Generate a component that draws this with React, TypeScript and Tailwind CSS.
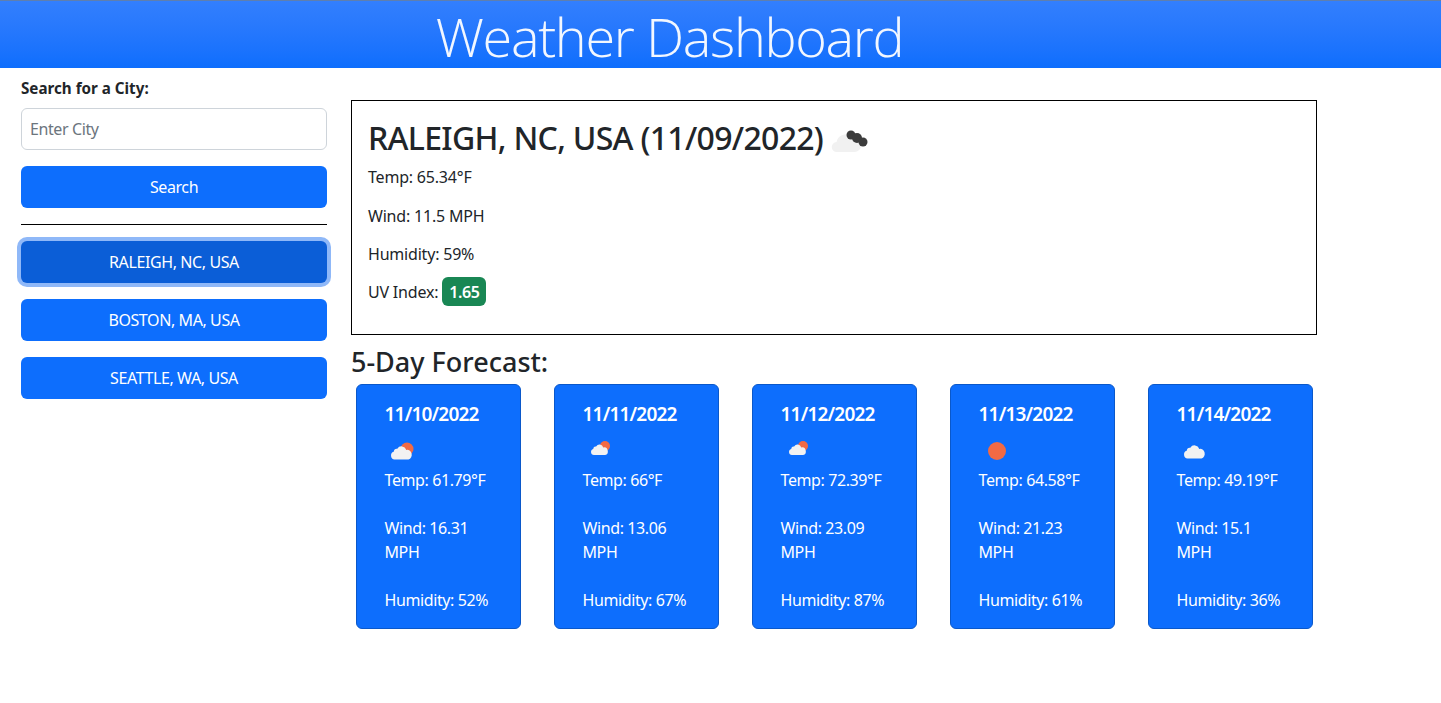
import React from 'react';

type IconKind = 'few' | 'few-small' | 'sun' | 'cloud';

interface ForecastDay {
  date: string;
  temp: string;
  wind: string;
  humidity: string;
  icon: IconKind;
}

const forecast: ForecastDay[] = [
  { date: '11/10/2022', temp: '61.79', wind: '16.31', humidity: '52', icon: 'few' },
  { date: '11/11/2022', temp: '66', wind: '13.06', humidity: '67', icon: 'few-small' },
  { date: '11/12/2022', temp: '72.39', wind: '23.09', humidity: '87', icon: 'few-small' },
  { date: '11/13/2022', temp: '64.58', wind: '21.23', humidity: '61', icon: 'sun' },
  { date: '11/14/2022', temp: '49.19', wind: '15.1', humidity: '36', icon: 'cloud' },
];

// cloud drawn in a 21x14 box
const cloudPath = 'M3.500 14a3.500 3.500 0 0 1-.8-6.900 3.200 3.200 0 0 1 3.600-2.700A5 5 0 0 1 15.200 5.500 4.300 4.300 0 0 1 17.500 14z';

const WeatherIcon: React.FC<{ kind: IconKind }> = ({ kind }) => {
  return (
    <svg className="block w-[34px] h-[40px]" viewBox="0 0 34 40">
      {kind === 'sun' && <circle cx="18" cy="25" r="9" fill="#f26a44" />}
      {kind === 'cloud' && <path transform="translate(7 17) scale(1 1.1)" d={cloudPath} fill="#f2f2f2" />}
      {kind === 'few' && (
        <>
          <circle cx="22" cy="23" r="6.500" fill="#f26a44" />
          <path transform="translate(6 18) scale(1 1.1)" d={cloudPath} fill="#f2f2f2" />
        </>
      )}
      {kind === 'few-small' && (
        <>
          <circle cx="22" cy="20" r="5" fill="#f26a44" />
          <path transform="translate(8 16.500) scale(.81 .9)" d={cloudPath} fill="#f2f2f2" />
        </>
      )}
    </svg>
  );
};

const BrokenClouds: React.FC = () => (
  <svg className="w-[38px] h-[34px] ml-2 shrink-0" viewBox="0 0 38 34">
    <path d="M6 31a5 5 0 0 1-.5-10A9.500 9.500 0 0 1 23 18a6.500 6.500 0 0 1 1 13z" fill="#f1f1f1" />
    <circle cx="20" cy="14" r="4.500" fill="#3c3c3c" />
    <circle cx="26" cy="17" r="5" fill="#3c3c3c" />
    <circle cx="32" cy="21" r="4.500" fill="#3c3c3c" />
  </svg>
);

const cityBtn = 'w-full h-[42px] rounded-md bg-[#0d6efd] text-white text-center tracking-[-0.4px]';

export default function App() {
  return (
    <div className="min-h-[703px] bg-white text-[#212529] text-base leading-6 font-['Noto_Sans','Open_Sans',sans-serif]">
      <header className="h-[68px] border-t border-[#5f7fae] pt-[3px] bg-gradient-to-b from-[#337ffd] to-[#0d6efd] flex justify-center pr-[102px]">
        <h1 className="text-[54px] leading-[64px] font-light text-[#f2f7ff] font-['Open_Sans',sans-serif] tracking-[-1.35px]">Weather Dashboard</h1>
      </header>

      <div className="flex">
        <aside className="w-[306px] ml-[21px] pt-[8px]">
          <label className="block font-bold text-[15.2px] mb-[8px] leading-6">Search for a City:</label>
          <input
            placeholder="Enter City"
            className="block w-full h-[42px] px-[8px] tracking-[-0.4px] border border-[#ced4da] rounded-md placeholder:text-[#6c757d] outline-none"
          />
          <button className="w-full h-[42px] mt-4 rounded-md bg-[#0d6efd] text-white tracking-[-0.4px]">Search</button>
          <hr className="mt-4 mb-4 border-t border-black" />
          <div className="flex flex-col gap-4">
            <button className="w-full h-[42px] rounded-md bg-[#0b5ed7] text-white tracking-[-0.4px] ring-4 ring-[#8fb8f8]">RALEIGH, NC, USA</button>
            <button className={cityBtn}>BOSTON, MA, USA</button>
            <button className={cityBtn}>SEATTLE, WA, USA</button>
          </div>
        </aside>

        <main className="w-[966px] ml-[24px] pt-[32px]">
          <section className="h-[235px] border border-black px-4 pt-[15px] tracking-[-0.2px]">
            <div className="flex items-center h-[44px]">
              <h2 className="text-[32px] leading-[44px] font-medium whitespace-nowrap tracking-[-0.7px]">RALEIGH, NC, USA (11/09/2022)</h2>
              <BrokenClouds />
            </div>
            <p className="mt-[5px]">Temp: 65.34°F</p>
            <p className="mt-[15px]">Wind: 11.5 MPH</p>
            <p className="mt-[14px]">Humidity: 59%</p>
            <p className="mt-[11px] flex items-center">
              UV Index:
              <span className="ml-1 w-[44px] h-[29px] justify-center rounded-md bg-[#198754] text-white font-semibold tracking-[-0.4px] flex items-center">1.65</span>
            </p>
          </section>

          <h3 className="text-[27px] leading-[30px] font-medium mt-[12px] mb-[7px]">5-Day Forecast:</h3>

          <div className="flex gap-[33px] pl-[5px]">
            {forecast.map((day) => (
              <article key={day.date} className="w-[165px] h-[245px] shrink-0 rounded-md border border-[#0a58ca] bg-[#0d6efd] text-white pl-[27.5px] pr-[26px] pt-[17px] tracking-[-0.4px]">
                <h4 className="text-[19px] leading-6 font-semibold tracking-[-0.8px] whitespace-nowrap">{day.date}</h4>
                <WeatherIcon kind={day.icon} />
                <p className="mt-[2px]">Temp: {day.temp}°F</p>
                <p className="mt-6">Wind: {day.wind} MPH</p>
                <p className="mt-6">Humidity: {day.humidity}%</p>
              </article>
            ))}
          </div>
        </main>
      </div>
    </div>
  );
}
